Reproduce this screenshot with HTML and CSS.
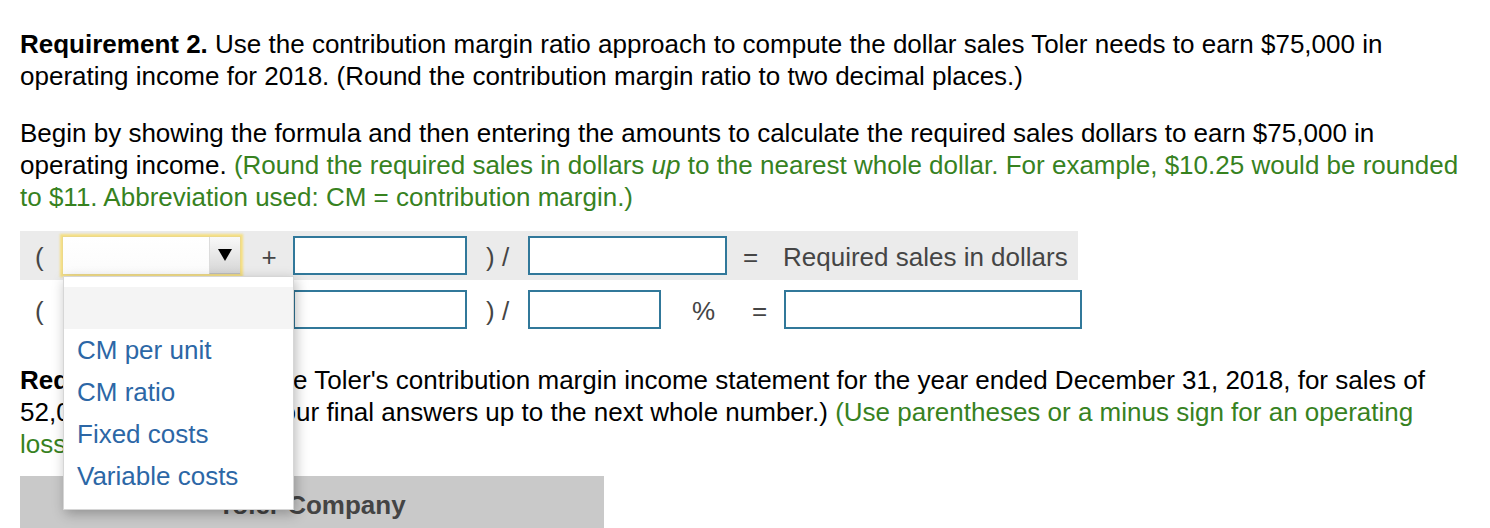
FILE: index.html
```html
<!DOCTYPE html>
<html>
<head>
<meta charset="utf-8">
<link rel="stylesheet" href="styles.css">
</head>
<body>
<div class="page">
  <p class="req"><b>Requirement 2.</b> Use the contribution margin ratio approach to compute the dollar sales Toler needs to earn $75,000 in<br>operating income for 2018. (Round the contribution margin ratio to two decimal places.)</p>
  <p class="req p2">Begin by showing the formula and then entering the amounts to calculate the required sales dollars to earn $75,000 in<br>operating income. <span class="hint">(Round the required sales in dollars <i>up</i> to the nearest whole dollar. For example, $10.25 would be rounded<br>to $11. Abbreviation used: CM = contribution margin.)</span></p>

  <div class="formula">
    <div class="frow shaded">
      <span class="cell paren">(</span>
      <div class="selwrap">
        <div class="select">
          <span class="selbtn"><svg width="14" height="12" viewBox="0 0 14 12"><polygon points="0,0 14,0 7,12" fill="#000"/></svg></span>
        </div>
        <div class="menu">
          <div class="opt blank"></div>
          <div class="opt">CM per unit</div>
          <div class="opt">CM ratio</div>
          <div class="opt">Fixed costs</div>
          <div class="opt">Variable costs</div>
        </div>
      </div>
      <span class="cell plus">+</span>
      <span class="box w174"></span>
      <span class="cell close">) /</span>
      <span class="box w199"></span>
      <span class="cell eq1">=</span>
      <span class="cell label">Required sales in dollars</span>
    </div>
    <div class="frow">
      <span class="cell paren">(</span>
      <div class="selwrap"></div>
      <span class="cell plus"></span>
      <span class="box w174"></span>
      <span class="cell close">) /</span>
      <span class="box w133"></span>
      <span class="cell pct">%</span>
      <span class="cell eq2">=</span>
      <span class="box w298"></span>
    </div>
  </div>

  <p class="req p3"><b>Requirement 3.</b> Prepare Toler's contribution margin income statement for the year ended December 31, 2018, for sales of<br>52,000 units. (Round your final answers up to the next whole number.) <span class="hint">(Use parentheses or a minus sign for an operating<br>loss.)</span></p>

  <div class="stmt">
    <div class="stmt-head">Toler Company</div>
  </div>
</div>
</body>
</html>
```

FILE: styles.css
```css
html, body {
  margin: 0;
  padding: 0;
  background: #fff;
}
body {
  font-family: "Liberation Sans", Arial, sans-serif;
  color: #000;
  overflow: hidden;
}
.page {
  padding: 28px 20px 0 20px;
}
.req {
  margin: 0;
  font-size: 26px;
  line-height: 32px;
  white-space: nowrap;
}
.req b {
  font-weight: bold;
}
.p2 {
  margin-top: 25px;
}
.hint {
  color: #37821f;
}
.formula {
  margin-top: 18px;
  width: 1058px;
}
.frow {
  display: flex;
  align-items: center;
  height: 49px;
  font-size: 26px;
  color: #454545;
}
.frow + .frow {
  margin-top: 5px;
}
.shaded {
  background: #ebebeb;
}
.cell {
  flex: none;
  display: block;
  box-sizing: border-box;
  padding-top: 4px;
}
.paren {
  width: 38px;
  padding-left: 15px;
}
.plus {
  width: 48px;
  text-align: center;
}
.close {
  width: 61px;
  padding-left: 19px;
}
.eq1 {
  width: 56px;
  padding-left: 16px;
}
.pct {
  width: 72px;
  padding-left: 31px;
}
.eq2 {
  width: 51px;
  padding-left: 19px;
}
.label {
  padding-left: 0;
}
.box {
  flex: none;
  display: block;
  box-sizing: border-box;
  height: 39px;
  border: 2px solid #31789a;
  background: #fff;
}
.w174 { width: 174px; }
.w199 { width: 199px; }
.w133 { width: 133px; }
.w298 { width: 298px; }

.selwrap {
  position: relative;
  flex: none;
  width: 187px;
  box-sizing: border-box;
  padding: 0 4px;
}
.select {
  position: relative;
  height: 39px;
  box-sizing: border-box;
  border: 1px solid #ecd98a;
  background: linear-gradient(#ffffff, #fbfbfb);
  box-shadow: 0 0 2px 2px rgba(247, 221, 110, 0.85);
}
.selbtn {
  position: absolute;
  right: 0;
  top: 0;
  bottom: 0;
  width: 31px;
  display: flex;
  align-items: center;
  justify-content: center;
  background: linear-gradient(#f9f9f9, #d6d6d6);
  border-left: 1px solid #dcdcdc;
  border-bottom: 1px solid #bdbdbd;
  box-sizing: border-box;
}
.menu {
  position: absolute;
  left: 5px;
  top: 40px;
  width: 231px;
  box-sizing: border-box;
  background: #fff;
  border: 1px solid #d6d6d6;
  padding: 10px 0 12px 0;
  box-shadow: 2px 4px 12px rgba(0, 0, 0, 0.28);
  z-index: 5;
}
.opt {
  height: 42px;
  line-height: 42px;
  padding-left: 13px;
  font-size: 26px;
  color: #2c67a6;
  white-space: nowrap;
}
.opt.blank {
  background: #f4f4f4;
}
.p3 {
  margin-top: 30px;
}
.stmt {
  margin-top: 16px;
  width: 584px;
  height: 60px;
  background: #c9c9c9;
}
.stmt-head {
  text-align: center;
  font-weight: bold;
  font-size: 26px;
  color: #444;
  padding-top: 14px;
}
```
